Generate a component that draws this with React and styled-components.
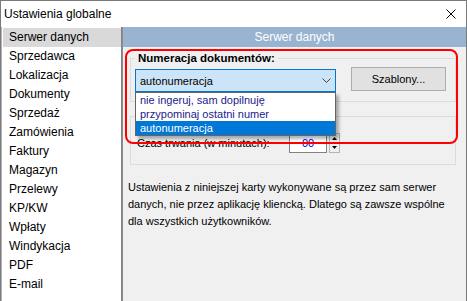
import React from 'react';
import styled, { createGlobalStyle } from 'styled-components';

const GlobalStyle = createGlobalStyle`
  html, body { margin: 0; padding: 0; background: #f0f0f0; }
  body { font-family: "Liberation Sans", Arial, sans-serif; color: #000; }
  #root { width: 467px; height: 301px; }
  * { box-sizing: border-box; }
`;

const Window = styled.div`
  width: 467px;
  height: 301px;
  border: 1px solid #7a7a7a;
  border-bottom: none;
  display: flex;
  flex-direction: column;
  background: #f0f0f0;
  overflow: hidden;
`;

const TitleBar = styled.div`
  height: 26px;
  flex: none;
  background: #fff;
  display: flex;
  align-items: center;
  justify-content: space-between;
  padding: 0 10px 0 3px;
  font-size: 12px;
`;

const CloseIcon = styled.svg`
  display: block;
  width: 10px;
  height: 10px;
`;

const Body = styled.div`
  flex: 1;
  display: flex;
  min-height: 0;
`;

const Sidebar = styled.ul`
  list-style: none;
  margin: 0;
  padding: 1px 0 0 1px;
  width: 121px;
  flex: none;
  background: #fff;
  border-left: 1px solid #b4b4b4;
  border-right: 1px solid #828282;
`;

const NavItem = styled.li`
  height: 19px;
  line-height: 19px;
  padding-left: 6px;
  font-size: 12px;
  white-space: nowrap;
  background: ${p => (p.$active ? '#d9d9d9' : 'transparent')};
`;

const Panel = styled.div`
  flex: 1;
  display: flex;
  flex-direction: column;
  border-left: 1px solid #8c8c8c;
  min-width: 0;
`;

const PanelHeader = styled.div`
  height: 20px;
  flex: none;
  background: #99b4d1;
  color: #fff;
  font-size: 12px;
  line-height: 20px;
  text-align: center;
`;

const Content = styled.div`
  position: relative;
  flex: 1;
  padding: 5px 10px 0 7px;
`;

const Group = styled.fieldset`
  margin: ${p => p.$mt || 0}px 0 0 0;
  padding: ${p => p.$pad};
  border: 1px solid #dcdcdc;
  border-radius: 0;
  min-width: 0;
`;

const GroupLegend = styled.legend`
  padding: 0 3px;
  font-size: 11.5px;
  font-weight: bold;
  line-height: 13px;
`;

const Row = styled.div`
  display: flex;
  align-items: flex-start;
  gap: ${p => p.$gap || 0}px;
`;

const ComboWrap = styled.div`
  position: relative;
  width: 201px;
  margin-top: 2px;
  flex: none;
`;

const Combo = styled.div`
  height: 23px;
  border: 1px solid #0078d7;
  background: #cce4f7;
  display: flex;
  align-items: center;
  justify-content: space-between;
  padding: 0 4px 0 4px;
  font-size: 11px;
`;

const Chevron = styled.svg`
  display: block;
  width: 9px;
  height: 5px;
`;

const DropList = styled.ul`
  position: absolute;
  top: 100%;
  left: 0;
  right: 0;
  margin: 0;
  padding: 0;
  list-style: none;
  background: #fff;
  border: 1px solid #646464;
  box-shadow: 3px 3px 3px rgba(0, 0, 0, 0.3);
  z-index: 5;
`;

const DropItem = styled.li`
  height: 14px;
  line-height: 14px;
  padding-left: 4px;
  font-size: 11px;
  white-space: nowrap;
  color: ${p => (p.$selected ? '#fff' : '#1a1a8c')};
  background: ${p => (p.$selected ? '#0078d7' : 'transparent')};
`;

const Button = styled.button`
  width: 95px;
  height: 24px;
  flex: none;
  border: 1px solid #adadad;
  background: #e1e1e1;
  font-family: inherit;
  font-size: 11px;
  color: #000;
  padding: 0;
`;

const FieldLabel = styled.div`
  width: 152px;
  flex: none;
  font-size: 11px;
  line-height: 20px;
  white-space: nowrap;
`;

const NumberBox = styled.div`
  width: 38px;
  height: 20px;
  border: 1px solid #828282;
  background: #fff;
  color: #0000e0;
  font-size: 11px;
  line-height: 18px;
  text-align: center;
`;

const Spinner = styled.div`
  width: 11px;
  height: 20px;
  margin-left: 2px;
  display: flex;
  flex-direction: column;
  border: 1px solid #b4b4b4;
  background: #f0f0f0;
`;

const SpinHalf = styled.div`
  flex: 1;
  display: flex;
  align-items: center;
  justify-content: center;
  border-top: ${p => (p.$bottom ? '1px solid #d0d0d0' : 'none')};
`;

const Note = styled.p`
  margin: 14px 0 0 -2px;
  font-size: 11px;
  line-height: 17px;
  white-space: nowrap;
`;

const Highlight = styled.div`
  position: absolute;
  left: 2px;
  top: 2px;
  width: 333px;
  height: 95px;
  border: 2px solid #ff0000;
  border-radius: 8px;
  pointer-events: none;
  z-index: 10;
`;

const navItems = [
  'Serwer danych', 'Sprzedawca', 'Lokalizacja', 'Dokumenty', 'Sprzedaż',
  'Zamówienia', 'Faktury', 'Magazyn', 'Przelewy', 'KP/KW', 'Wpłaty',
  'Windykacja', 'PDF', 'E-mail',
];

const options = ['nie ingeruj, sam dopilnuję', 'przypominaj ostatni numer', 'autonumeracja'];

export default function App() {
  return (
    <>
      <GlobalStyle />
      <Window>
        <TitleBar>
          <span>Ustawienia globalne</span>
          <CloseIcon viewBox="0 0 10 10">
            <path d="M0.5 0.5 L9.5 9.5 M9.5 0.5 L0.5 9.5" stroke="#000" strokeWidth="1" fill="none" />
          </CloseIcon>
        </TitleBar>
        <Body>
          <Sidebar>
            {navItems.map((n, i) => (
              <NavItem key={n} $active={i === 0}>{n}</NavItem>
            ))}
          </Sidebar>
          <Panel>
            <PanelHeader>Serwer danych</PanelHeader>
            <Content>
              <Group $pad="2px 9px 9px 4px">
                <GroupLegend>Numeracja dokumentów:</GroupLegend>
                <Row $gap={15}>
                  <ComboWrap>
                    <Combo>
                      <span>autonumeracja</span>
                      <Chevron viewBox="0 0 9 5">
                        <path d="M0.5 0.5 L4.5 4.5 L8.5 0.5" stroke="#444" strokeWidth="1" fill="none" />
                      </Chevron>
                    </Combo>
                    <DropList>
                      {options.map((o, i) => (
                        <DropItem key={o} $selected={i === 2}>{o}</DropItem>
                      ))}
                    </DropList>
                  </ComboWrap>
                  <Button>Szablony...</Button>
                </Row>
              </Group>
              <Group $mt={14} $pad="16px 9px 11px 6px">
                <Row>
                  <FieldLabel>Czas trwania (w minutach):</FieldLabel>
                  <NumberBox>00</NumberBox>
                  <Spinner>
                    <SpinHalf>
                      <svg width="5" height="3" viewBox="0 0 5 3"><path d="M2.5 0 L5 3 L0 3 Z" fill="#000" /></svg>
                    </SpinHalf>
                    <SpinHalf $bottom>
                      <svg width="5" height="3" viewBox="0 0 5 3"><path d="M0 0 L5 0 L2.5 3 Z" fill="#000" /></svg>
                    </SpinHalf>
                  </Spinner>
                </Row>
              </Group>
              <Note>
                Ustawienia z niniejszej karty wykonywane są przez sam serwer<br />
                danych, nie przez aplikację kliencką. Dlatego są zawsze wspólne<br />
                dla wszystkich użytkowników.
              </Note>
              <Highlight />
            </Content>
          </Panel>
        </Body>
      </Window>
    </>
  );
}
